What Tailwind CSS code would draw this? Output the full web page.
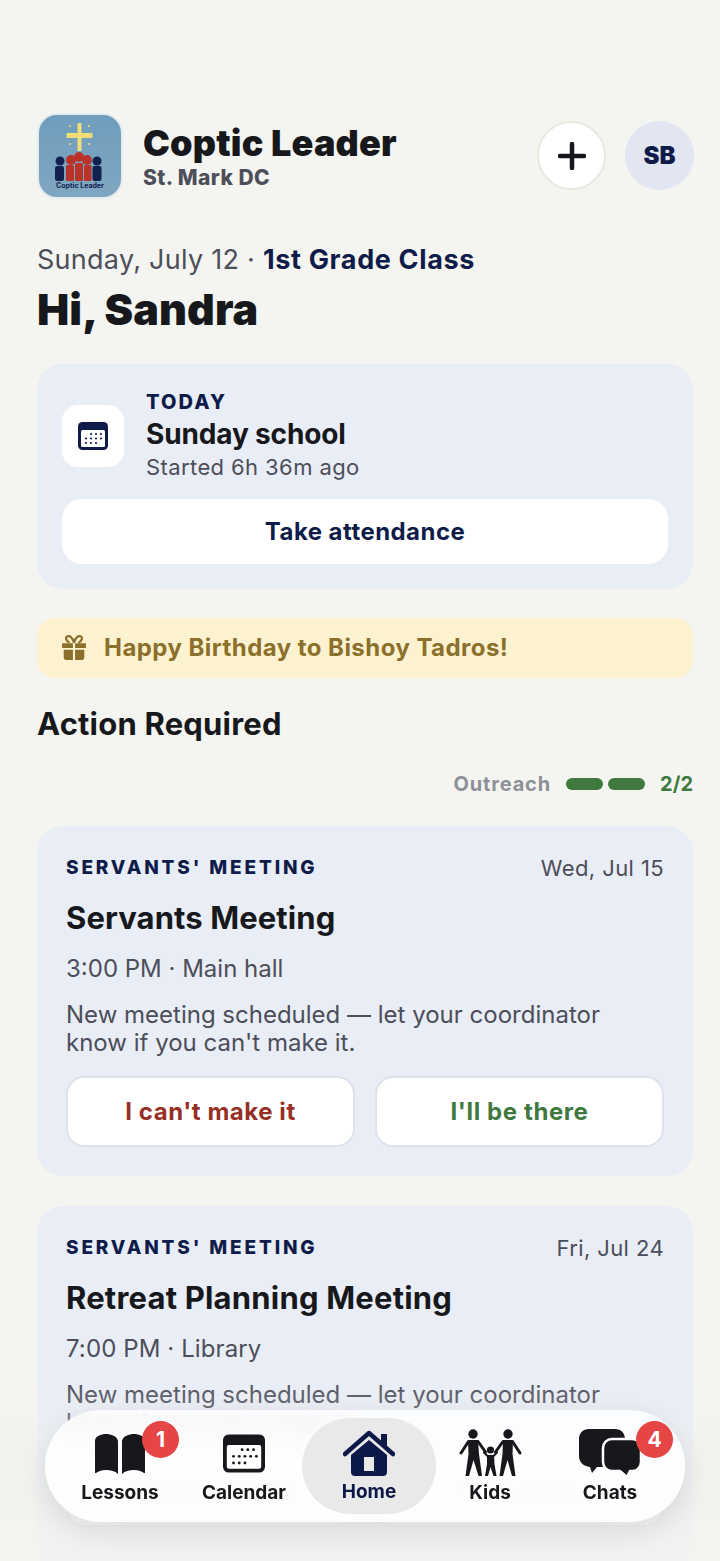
<!doctype html>
<html><head><meta charset="utf-8"><script src="https://cdn.jsdelivr.net/npm/@tailwindcss/browser@4"></script></head>
<body class="bg-[#f4f5f0]">
<div class="relative w-[720px] h-[1561px] overflow-hidden bg-[#f4f5f0] font-['Inter',sans-serif] text-[#17181c]">
  <div class="pl-[37px] pr-[27px] pt-[112px]">
    <header class="flex items-center h-[87px] -mr-[1px]">
      <div class="relative w-[86px] h-[86px] rounded-[20px] border-2 border-[#e6ebec] bg-gradient-to-b from-[#6f9dbd] to-[#80a7c1] shrink-0 overflow-hidden">
        <svg viewBox="0 0 86 86" class="absolute -left-[2px] -top-[2px] w-[86px] h-[86px]">
          <path d="M40.500 10h4v10h11v5h-11v13h-4V25h-11v-5h11z" fill="#f0dd78"/>
          <g fill="#f0dd78"><circle cx="33" cy="13" r="1"/><circle cx="52" cy="13" r="1"/><circle cx="33" cy="31" r="1"/><circle cx="52" cy="31" r="1"/></g>
          <g fill="#12214f"><circle cx="23" cy="48" r="4.500"/><circle cx="60" cy="48" r="4.500"/><rect x="18" y="53" width="9" height="15" rx="2"/><rect x="55.500" y="53" width="9" height="15" rx="2"/></g>
          <g fill="#b93328"><circle cx="34" cy="47" r="5"/><circle cx="50" cy="47" r="5"/><circle cx="42" cy="44" r="5"/><rect x="29" y="52" width="8" height="16" rx="1.500"/><rect x="47" y="52" width="7.500" height="16" rx="1.500"/><rect x="38" y="50" width="8" height="18" rx="1.500"/></g>
        </svg>
        <span class="absolute left-0 right-0 top-[67px] text-center text-[7px] leading-[8px] font-bold text-[#12214f]">Coptic Leader</span>
      </div>
      <div class="ml-[20px] flex-1">
        <div class="text-[36px] leading-[45px] font-black tracking-[0.2px] text-[#17181c]">Coptic Leader</div>
        <div class="text-[21px] leading-[24px] font-extrabold tracking-[0.45px] text-[#4c4e59] mt-[0px]">St. Mark DC</div>
      </div>
      <div class="w-[69px] h-[69px] rounded-full bg-white border-2 border-[#e9e9e1] flex items-center justify-center">
        <svg viewBox="0 0 28 28" class="w-[28px] h-[28px]"><path d="M14 2v24M2 14h24" stroke="#17181c" stroke-width="4.500" stroke-linecap="round"/></svg>
      </div>
      <div class="ml-[19px] w-[69px] h-[69px] rounded-full bg-[#e2e5f2] flex items-center justify-center text-[24px] font-black text-[#0f1c4a]">SB</div>
    </header>

    <div class="mt-[41px] h-[40px] flex items-center text-[27px] text-[#4c4e59]">
      <span class="tracking-[0.27px]">Sunday, July 12 ·&nbsp;</span><span class="font-bold tracking-[0.65px] text-[#0f1c4a]">1st Grade Class</span>
    </div>
    <h1 class="mt-[1px] text-[43px] leading-[56px] font-black tracking-[0.1px] text-[#17181c]">Hi, Sandra</h1>

    <section class="mt-[27px] h-[225px] rounded-[26px] bg-[#e9edf6] px-[25px] pt-[20px]">
      <div class="flex items-center h-[110px]">
        <div class="w-[62px] h-[62px] rounded-[16px] bg-white flex items-center justify-center mt-[-7px]">
          <svg viewBox="0 0 30 28" class="w-[30px] h-[28px]"><rect width="30" height="28" rx="4.500" fill="#0f1c4a"/><rect x="3" y="8" width="24" height="17" rx="1.500" fill="#fff"/><g fill="#0f1c4a"><circle cx="13" cy="12" r="1.100"/><circle cx="18" cy="12" r="1.100"/><circle cx="23" cy="12" r="1.100"/><circle cx="8" cy="16.500" r="1.100"/><circle cx="13" cy="16.500" r="1.100"/><circle cx="18" cy="16.500" r="1.100"/><circle cx="23" cy="16.500" r="1.100"/><circle cx="8" cy="21" r="1.100"/><circle cx="13" cy="21" r="1.100"/><circle cx="18" cy="21" r="1.100"/></g></svg>
        </div>
        <div class="ml-[22px] mt-[-7px]">
          <div class="text-[20px] leading-[26px] font-extrabold tracking-[2.1px] text-[#0f1c4a]">TODAY</div>
          <div class="text-[28px] leading-[36px] font-bold tracking-[-0.15px] mt-[1px] text-[#17181c]">Sunday school</div>
          <div class="text-[22px] leading-[30px] tracking-[0.4px] text-[#4c4e59]">Started 6h 36m ago</div>
        </div>
      </div>
      <div class="mt-[5px] h-[65px] rounded-[20px] bg-white flex items-center justify-center text-[24px] font-bold tracking-[0.45px] text-[#0f1c4a]">Take attendance</div>
    </section>

    <div class="mt-[29px] h-[60px] rounded-[18px] bg-[#fcf2cf] flex items-center px-[24px] text-[24px] font-bold tracking-[0.45px] text-[#8c6f2a]">
      <svg viewBox="0 0 24 24" class="w-[26px] h-[26px] mr-[17px]" fill="#8c6f2a"><path d="M1 7.500h10V12H1zM13 7.500h10V12H13zM2.500 13.500H11V23H4.500a2 2 0 0 1-2-2zM13 13.500h8.500V21a2 2 0 0 1-2 2H13z"/><path d="M12 7C10.500 2 8 .5 6 1.200 3.800 2 4.500 6 8 7M12 7c1.500-5 4-6.500 6-5.800 2.200.8 1.500 4.800-2 5.800" fill="none" stroke="#8c6f2a" stroke-width="2"/></svg>
      Happy Birthday to Bishoy Tadros!
    </div>

    <h2 class="mt-[26px] text-[31px] leading-[40px] font-bold tracking-[0.2px] text-[#17181c]">Action Required</h2>

    <div class="mt-[28px] h-[24px] flex items-center justify-end">
      <span class="text-[20px] font-bold tracking-[0.85px] text-[#8e9098]">Outreach</span>
      <span class="ml-[15px] w-[37px] h-[12px] rounded-full bg-[#40793f]"></span>
      <span class="ml-[5px] w-[37px] h-[12px] rounded-full bg-[#40793f]"></span>
      <span class="ml-[15px] text-[20px] font-bold text-[#40793f]">2/2</span>
    </div>

    <section class="mt-[30px] h-[350px] rounded-[26px] bg-[#e9edf6] px-[29px] pt-[29px]">
      <div class="flex justify-between items-center h-[26px]">
        <span class="text-[19px] font-extrabold tracking-[2.85px] text-[#0f1c4a]">SERVANTS' MEETING</span>
        <span class="text-[22px] tracking-[0.4px] text-[#4c4e59]">Wed, Jul 15</span>
      </div>
      <div class="mt-[17px] text-[31px] leading-[40px] font-bold tracking-[0.1px]">Servants Meeting</div>
      <div class="mt-[15px] text-[24px] leading-[32px] text-[#4c4e59]">3:00 PM · Main hall</div>
      <div class="mt-[16px] text-[24px] leading-[28px] text-[#4c4e59]">New meeting scheduled — let your coordinator<br>know if you can't make it.</div>
      <div class="mt-[19px] flex gap-[20px]">
        <div class="flex-1 h-[71px] rounded-[18px] bg-white border-2 border-[#dfe2ea] flex items-center justify-center text-[24px] font-bold tracking-[0.55px] text-[#963027]">I can't make it</div>
        <div class="flex-1 h-[71px] rounded-[18px] bg-white border-2 border-[#dfe2ea] flex items-center justify-center text-[24px] font-bold tracking-[0.6px] text-[#40793f]">I'll be there</div>
      </div>
    </section>

    <section class="mt-[30px] h-[400px] rounded-[26px] bg-[#e9edf6] px-[29px] pt-[29px]">
      <div class="flex justify-between items-center h-[26px]">
        <span class="text-[19px] font-extrabold tracking-[2.85px] text-[#0f1c4a]">SERVANTS' MEETING</span>
        <span class="text-[22px] tracking-[0.4px] text-[#4c4e59]">Fri, Jul 24</span>
      </div>
      <div class="mt-[17px] text-[31px] leading-[40px] font-bold tracking-[0.2px]">Retreat Planning Meeting</div>
      <div class="mt-[15px] text-[24px] leading-[32px] tracking-[0.1px] text-[#4c4e59]">7:00 PM · Library</div>
      <div class="mt-[16px] text-[24px] leading-[28px] text-[#4c4e59]">New meeting scheduled — let your coordinator<br>know if you can't make it.</div>
      <div class="mt-[19px] flex gap-[20px]">
        <div class="flex-1 h-[71px] rounded-[18px] bg-white border-2 border-[#dfe2ea] flex items-center justify-center text-[24px] font-bold tracking-[0.55px] text-[#963027]">I can't make it</div>
        <div class="flex-1 h-[71px] rounded-[18px] bg-white border-2 border-[#dfe2ea] flex items-center justify-center text-[24px] font-bold tracking-[0.6px] text-[#40793f]">I'll be there</div>
      </div>
    </section>
  </div>

  <div class="absolute left-0 right-0 bottom-0 h-[185px] bg-gradient-to-b from-[#f4f5f0]/0 via-[#f0f1ee]/60 to-[#f4f5f0]/85"></div>

  <nav class="absolute left-[45px] top-[1410px] w-[640px] h-[112px] rounded-[56px] bg-white/85 backdrop-blur-sm shadow-[0_10px_30px_rgba(0,0,0,0.10)] grid grid-cols-[132px_116px_134px_108px_132px] pl-[9px] pr-[9px] items-stretch">
    <div class="relative flex flex-col items-center pt-[24px]">
      <svg viewBox="0 0 50 40" class="w-[50px] h-[40px]" fill="#17181c"><path d="M0 7C0 2 6 0 11 0s11 2 12 7v33c-3-3-7-4-12-4-4 0-7 1-10 3-.5.300-1 0-1-.5zM27 7C28 2 34 0 39 0s11 2 11 7v31.500c0 .5-.5.800-1 .5-3-2-6-3-10-3-5 0-9 1-12 4z"/></svg>
      <div class="absolute left-[88px] top-[11px] w-[37px] h-[37px] rounded-full bg-[#e54545] flex items-center justify-center text-white text-[21px] font-bold">1</div>
      <span class="mt-[6px] text-[19px] leading-[26px] font-bold">Lessons</span>
    </div>
    <div class="flex flex-col items-center pt-[24px]">
      <svg viewBox="0 0 44 40" class="w-[42px] h-[39px]"><rect width="44" height="40" rx="6" fill="#17181c"/><rect x="4" y="11" width="36" height="25" rx="2" fill="#fff"/><g fill="#17181c"><circle cx="20" cy="16" r="1.500"/><circle cx="26" cy="16" r="1.500"/><circle cx="32" cy="16" r="1.500"/><circle cx="11" cy="23" r="1.500"/><circle cx="17" cy="23" r="1.500"/><circle cx="23" cy="23" r="1.500"/><circle cx="29" cy="23" r="1.500"/><circle cx="35" cy="23" r="1.500"/><circle cx="11" cy="30" r="1.500"/><circle cx="17" cy="30" r="1.500"/><circle cx="23" cy="30" r="1.500"/></g></svg>
      <span class="mt-[7px] text-[19px] leading-[26px] font-bold">Calendar</span>
    </div>
    <div class="my-[8px] rounded-[48px] bg-[#e8e9e8] flex flex-col items-center pt-[12px]">
      <svg viewBox="0 0 52 46" class="w-[52px] h-[46px]"><path d="M2 24 26 3l24 21" fill="none" stroke="#0c1848" stroke-width="4.500" stroke-linecap="round" stroke-linejoin="round"/><path d="M38 4h6v12h-6z" fill="#0c1848"/><path d="M26 10 8 25v17a4 4 0 0 0 4 4h28a4 4 0 0 0 4-4V25zM21 27h10v14H21z" fill="#0c1848" fill-rule="evenodd"/></svg>
      <span class="mt-[3px] text-[19px] leading-[26px] font-bold text-[#0c1848]">Home</span>
    </div>
    <div class="flex flex-col items-center pt-[19px]">
      <svg viewBox="0 0 63 48" class="w-[63px] h-[48px]" fill="#17181c" stroke-linecap="round">
        <circle cx="14" cy="5" r="4.700"/><circle cx="49" cy="5" r="4.700"/><circle cx="31.500" cy="21" r="3.600"/>
        <path d="M9 11h10l1 14 3 22h-3.500L14.500 31 10 47H6.500l3-22z"/><path d="M44 11h10l-.5 14 3 22H53L48.500 31 44 47h-3.500l3-22z"/>
        <path d="M9.500 12.500 2 24M19 12.500 26.500 23M44 12.500 36.500 23M53.500 12.500 61 24" stroke="#17181c" stroke-width="3" fill="none"/>
        <path d="M28 26h7l.5 9 2 12h-3l-3-9-2.500 9h-3l2-12z"/>
        <path d="M28.500 27 25 23.500M34.500 27 38 23.500" stroke="#17181c" stroke-width="2" fill="none"/>
      </svg>
      <span class="mt-[3px] text-[19px] leading-[26px] font-bold">Kids</span>
    </div>
    <div class="relative flex flex-col items-center pt-[19px]">
      <svg viewBox="0 0 62 48" class="w-[62px] h-[48px]" fill="#17181c"><path d="M10 0h26c6 0 10 4 10 10v18c0 6-4 10-10 10H18l-5 6-2-6C4 37 0 33 0 27V10C0 4 4 0 10 0z"/><path d="M33 10h20c5 0 9 4 9 9v14c0 5-4 9-8 9h-3l-3 6-7-6H33c-5 0-9-4-9-9V19c0-5 4-9 9-9z" stroke="#fff" stroke-width="2.500"/></svg>
      <div class="absolute left-[92px] top-[11px] w-[37px] h-[37px] rounded-full bg-[#e54545] flex items-center justify-center text-white text-[21px] font-bold">4</div>
      <span class="mt-[3px] text-[19px] leading-[26px] font-bold">Chats</span>
    </div>
  </nav>
</div>
</body></html>
